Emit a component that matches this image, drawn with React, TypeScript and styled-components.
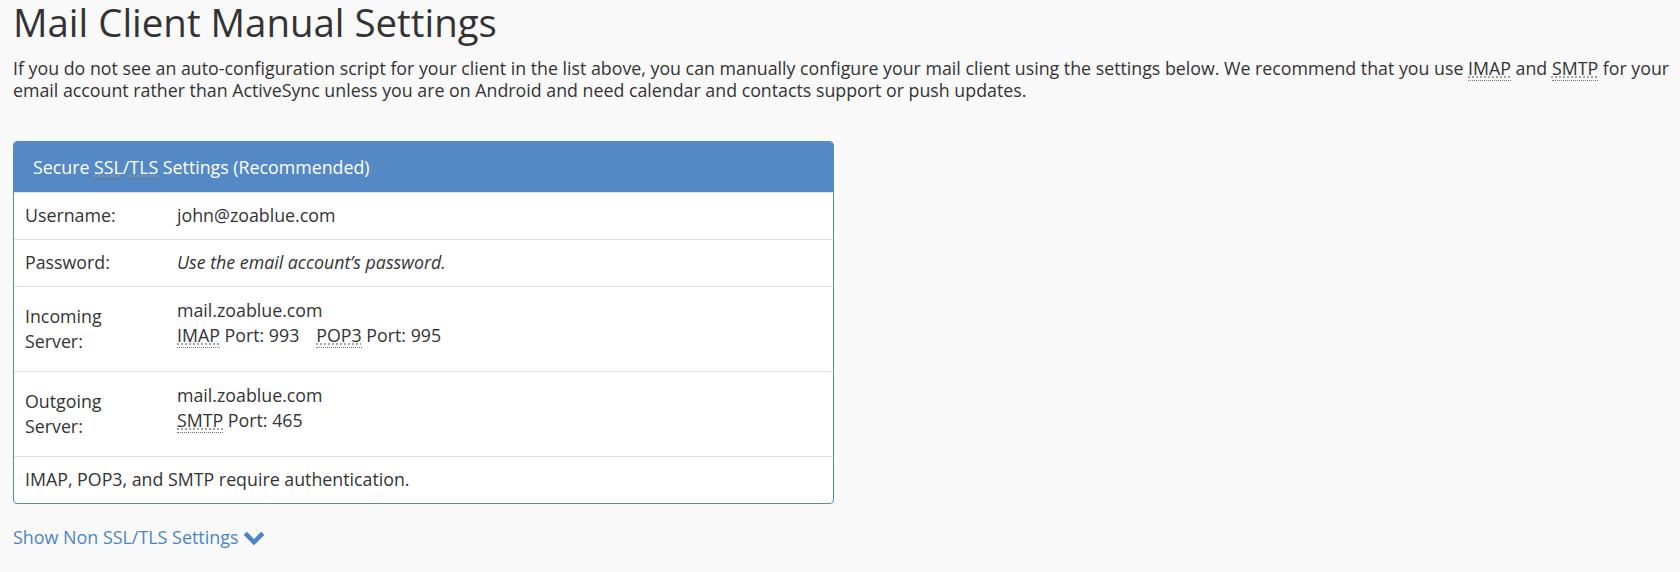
import React from "react";
import styled, { createGlobalStyle } from "styled-components";

const Global = createGlobalStyle`
  html, body { margin: 0; padding: 0; background: #f9f9f9; }
  body { font-family: "Open Sans", "Liberation Sans", sans-serif; color: #333; }
`;

const Page = styled.div`
  padding: 1px 8px 0 13px;
`;

const Title = styled.h1`
  margin: 0;
  font-size: 38.4px;
  font-weight: 400;
  line-height: 1.1;
  color: #333;
`;

const Intro = styled.p`
  margin: 14px 0 0;
  font-size: 17.8px;
  line-height: 22px;
`;

const Abbr = styled.abbr`
  text-decoration: underline dotted;
  text-decoration-color: #999;
  border-bottom: 1px dotted #777;
  cursor: help;
`;

const Panel = styled.section`
  margin-top: 40px;
  width: 821px;
  box-sizing: border-box;
  border: 1px solid #5589c5;
  border-radius: 4px;
  background: #fff;
  overflow: hidden;
  font-size: 17.8px;
  line-height: 25px;
`;

const PanelHeader = styled.div`
  background: #5589c5;
  color: #fff;
  padding: 13px 19px 12px;
`;

const Row = styled.div`
  display: grid;
  grid-template-columns: 163px 1fr;
  align-items: center;
  padding: 10px 0 11px;
  border-top: 1px solid #e2e2e2;
  &:first-of-type { border-top: none; }
`;

const Label = styled.div`
  padding: 0 50px 0 11px;
`;

const Value = styled.div<{ $extra?: boolean; $italic?: boolean }>`
  padding-right: 11px;
  padding-bottom: ${(p) => (p.$extra ? "12px" : "0")};
  padding-top: ${(p) => (p.$extra ? "1px" : "0")};
  font-style: ${(p) => (p.$italic ? "italic" : "normal")};
`;

const Note = styled.div`
  padding: 10px 11px 11px;
  border-top: 1px solid #e2e2e2;
`;

const Spacer = styled.span`
  display: inline-block;
  width: 17px;
`;

const Toggle = styled.a`
  display: inline-flex;
  align-items: center;
  gap: 6px;
  margin-top: 21px;
  font-size: 17.9px;
  line-height: 25px;
  color: #4a85c7;
  text-decoration: none;
  cursor: pointer;
`;

const Chevron = () => (
  <svg width="20" height="13" viewBox="90 533 1612 1035" style={{ marginTop: 2 }}>
    <path
      fill="currentColor"
      d="M1683 808l-742 741q-19 19-45 19t-45-19l-742-741q-19-19-19-45.5t19-45.5l166-165q19-19 45-19t45 19l531 531 531-531q19-19 45-19t45 19l166 165q19 19 19 45.5t-19 45.5z"
    />
  </svg>
);

export default function App() {
  return (
    <Page>
      <Global />
      <Title>Mail Client Manual Settings</Title>
      <Intro>
        If you do not see an auto-configuration script for your client in the list above, you can
        manually configure your mail client using the settings below. We recommend that you use{" "}
        <Abbr title="Internet Message Access Protocol">IMAP</Abbr> and{" "}
        <Abbr title="Simple Mail Transfer Protocol">SMTP</Abbr> for your email account rather than
        ActiveSync unless you are on Android and need calendar and contacts support or push updates.
      </Intro>
      <Panel>
        <PanelHeader>
          Secure <Abbr title="Secure Sockets Layer">SSL</Abbr>/<Abbr title="Transport Layer Security">TLS</Abbr>{" "}
          Settings (Recommended)
        </PanelHeader>
        <Row>
          <Label>Username:</Label>
          <Value>john@zoablue.com</Value>
        </Row>
        <Row>
          <Label>Password:</Label>
          <Value $italic>Use the email account’s password.</Value>
        </Row>
        <Row>
          <Label>Incoming Server:</Label>
          <Value $extra>
            <div>mail.zoablue.com</div>
            <div>
              <Abbr title="Internet Message Access Protocol">IMAP</Abbr> Port: 993
              <Spacer />
              <Abbr title="Post Office Protocol 3">POP3</Abbr> Port: 995
            </div>
          </Value>
        </Row>
        <Row>
          <Label>Outgoing Server:</Label>
          <Value $extra>
            <div>mail.zoablue.com</div>
            <div>
              <Abbr title="Simple Mail Transfer Protocol">SMTP</Abbr> Port: 465
            </div>
          </Value>
        </Row>
        <Note>IMAP, POP3, and SMTP require authentication.</Note>
      </Panel>
      <Toggle>
        Show Non SSL/TLS Settings <Chevron />
      </Toggle>
    </Page>
  );
}
